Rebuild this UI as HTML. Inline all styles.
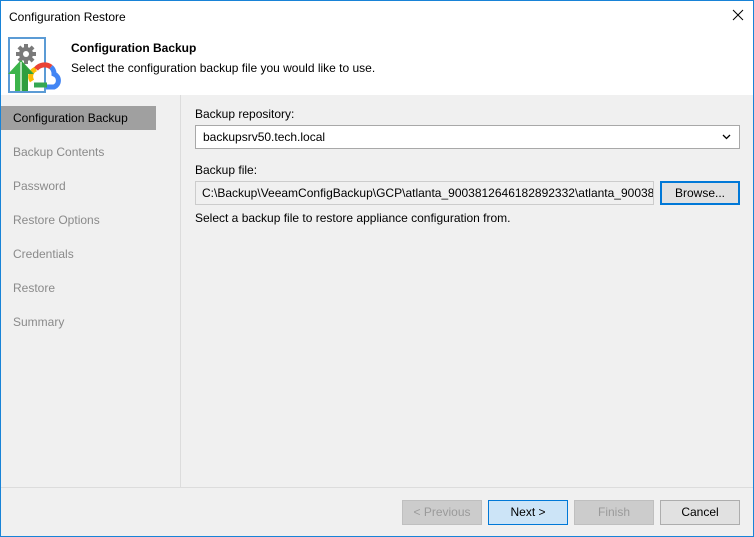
<!DOCTYPE html>
<html><head><meta charset="utf-8"><style>
*{margin:0;padding:0;box-sizing:border-box}
body{width:754px;height:537px;overflow:hidden;font-family:"Liberation Sans",sans-serif;font-size:12px;color:#000;background:#fff}
.win{position:absolute;left:0;top:0;width:754px;height:537px;border:1px solid #1883d7;background:#f0f0f0}
.title{position:absolute;left:0;top:0;width:752px;height:94px;background:#fff}
.t{position:absolute;left:8px;top:9px;font-size:12px}
.x{position:absolute;left:731px;top:8px}
.h1{position:absolute;left:70px;top:40px;font-weight:bold;font-size:12px}
.h2{position:absolute;left:70px;top:60px}
.left{position:absolute;left:0;top:94px;width:180px;height:392px;background:#f0f0f0;border-right:1px solid #dcdcdc}
.item{position:absolute;left:0;width:180px;height:24px;padding-left:12px;line-height:24px;color:#8a8a8a}
.sel{background:#a0a0a0;color:#000;width:155px}
.lbl{position:absolute}
.box{position:absolute;background:#fff;border:1px solid #a8a8a8;padding-left:7px;line-height:22px}
.btn{position:absolute;top:499px;width:80px;height:25px;border:1px solid #adadad;background:#e1e1e1;text-align:center;line-height:23px}
.dis{background:#ccc;border-color:#bfbfbf;color:#9a9a9a}
.sep{position:absolute;left:0;top:486px;width:752px;height:1px;background:#dcdcdc}
</style></head><body><div class="win">
<div class="title">
<div class="t">Configuration Restore</div>
<svg class="x" width="12" height="12"><path d="M1 1L11 11M11 1L1 11" stroke="#000" stroke-width="1"/></svg>
<svg style="position:absolute;left:0;top:30px" width="66" height="64">
<rect x="8" y="7" width="36" height="54" fill="#fff" stroke="#5b9bd5" stroke-width="2"/>
<g transform="translate(25,23)" fill="#7a7a7a">
<circle r="7"/>
<rect x="-2" y="-10" width="4" height="20"/>
<rect x="-10" y="-2" width="20" height="4"/>
<rect x="-2" y="-10" width="4" height="20" transform="rotate(45)"/>
<rect x="-2" y="-10" width="4" height="20" transform="rotate(-45)"/>
</g>
<circle cx="25" cy="23" r="3" fill="#fff"/>
<path d="M31 50a8 8 0 0 1 4-12" fill="none" stroke="#fbbc05" stroke-width="5"/>
<path d="M35 38a11 11 0 0 1 15 -2" fill="none" stroke="#ea4335" stroke-width="5"/>
<path d="M50 36a9 9 0 0 1 3 7a7 7 0 0 1 0 13h-8" fill="none" stroke="#4285f4" stroke-width="5"/>
<path d="M33 54h13" stroke="#34a853" stroke-width="5"/>
<path d="M20 29L7 43H14V60H27V43H33Z" fill="#3cb44a"/>
<path d="M20 31V60" stroke="#fff" stroke-width="1.2"/>
<path d="M21 31L32 43H27V60H21Z" fill="#2e9e3e"/>
</svg>
<div class="h1">Configuration Backup</div>
<div class="h2">Select the configuration backup file you would like to use.</div>
</div>
<div class="left">
<div class="item sel" style="top:11px">Configuration Backup</div>
<div class="item" style="top:45px">Backup Contents</div>
<div class="item" style="top:79px">Password</div>
<div class="item" style="top:113px">Restore Options</div>
<div class="item" style="top:147px">Credentials</div>
<div class="item" style="top:181px">Restore</div>
<div class="item" style="top:215px">Summary</div>
</div>
<div class="lbl" style="left:194px;top:106px">Backup repository:</div>
<div class="box" style="left:194px;top:124px;width:545px;height:24px">backupsrv50.tech.local
<svg style="position:absolute;right:8px;top:8px" width="9" height="6"><path d="M1 1L4.5 4.5L8 1" stroke="#000" fill="none" stroke-width="1.3"/></svg></div>
<div class="lbl" style="left:194px;top:162px">Backup file:</div>
<div class="box" style="left:194px;top:180px;width:459px;height:24px;background:#f0f0f0;border-color:#ccc;padding-left:6px;overflow:hidden;white-space:nowrap">C:\Backup\VeeamConfigBackup\GCP\atlanta_9003812646182892332\atlanta_9003812646</div>
<div class="btn" style="left:659px;top:180px;height:24px;border:2px solid #0078d7;line-height:20px">Browse...</div>
<div class="lbl" style="left:194px;top:210px">Select a backup file to restore appliance configuration from.</div>
<div class="sep"></div>
<div class="btn dis" style="left:401px">&lt; Previous</div>
<div class="btn" style="left:487px;background:#cce4f7;border-color:#0078d7">Next &gt;</div>
<div class="btn dis" style="left:573px">Finish</div>
<div class="btn" style="left:659px">Cancel</div>
</div></body></html>
